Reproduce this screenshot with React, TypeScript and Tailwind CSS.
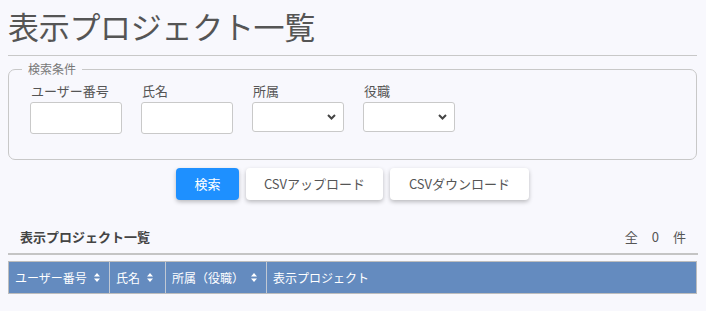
import { ChangeEvent, useState } from "react";

const sortIcon = (
  <svg width="6" height="9" viewBox="0 0 6 9" className="ml-[7px] shrink-0">
    <path d="M3 0 L6 3.5 H0 Z M0 5.5 H6 L3 9 Z" fill="#fff" />
  </svg>
);

function TextField({ label }: { label: string }) {
  const [value, setValue] = useState("");
  return (
    <label className="flex w-[92px] flex-col text-[13px] text-[#555]">
      <span className="ml-[1px] h-[17px] leading-[17px]">{label}</span>
      <input
        type="text"
        value={value}
        onChange={(e: ChangeEvent<HTMLInputElement>) => setValue(e.target.value)}
        className="mt-[3px] h-[32px] w-[92px] rounded-[3px] border border-[#c9c9c9] bg-white px-2 outline-none"
      />
    </label>
  );
}

function SelectField({ label }: { label: string }) {
  return (
    <label className="flex w-[92px] flex-col text-[13px] text-[#555]">
      <span className="ml-[1px] h-[17px] leading-[17px]">{label}</span>
      <div className="relative mt-[3px] h-[30px]">
        <select className="h-[30px] w-[92px] appearance-none rounded-[3px] border border-[#c9c9c9] bg-white px-2 outline-none">
          <option value=""></option>
        </select>
        {/* chevron drawn over the native select */}
        <svg
          width="9"
          height="6"
          viewBox="0 0 9 6"
          className="pointer-events-none absolute right-[8px] top-[12px]"
        >
          <path d="M1 1 L4.5 4.5 L8 1" stroke="#444" strokeWidth="2" fill="none" />
        </svg>
      </div>
    </label>
  );
}

export default function App() {
  const columns = [
    { label: "ユーザー番号", width: "w-[100px]", sort: true },
    { label: "氏名", width: "w-[56px]", sort: true },
    { label: "所属（役職）", width: "w-[101px]", sort: true },
    { label: "表示プロジェクト", width: "flex-1", sort: false },
  ];

  return (
    <div className="min-h-[311px] bg-[#f8f8fd] px-[8px] font-['Noto_Sans_CJK_JP','Noto_Sans',sans-serif] text-[#555]">
      <h1 className="h-[55px] pt-[6px] text-[31px] leading-[40px] tracking-[-0.3px] text-[#555]">
        表示プロジェクト一覧
      </h1>
      <div className="mr-[1px] h-px bg-[#c8c8c8]" />

      <fieldset className="mt-[6px] mr-[1px] h-[98px] rounded-[7px] border border-[#c8c8c8] pl-[21px] pt-[6px]">
        <legend className="ml-[-8px] px-[6px] text-[12px] leading-[14px] text-[#777]">
          検索条件
        </legend>
        <div className="flex gap-[19px]">
          <TextField label="ユーザー番号" />
          <TextField label="氏名" />
          <SelectField label="所属" />
          <SelectField label="役職" />
        </div>
      </fieldset>

      <div className="mt-[8px] flex justify-center gap-[7px] pr-[1px] text-[13px]">
        <button
          type="button"
          className="h-[32px] w-[63px] rounded-[4px] bg-[#1e90ff] text-white shadow-[0_2px_4px_rgba(0,0,0,0.25)]"
        >
          検索
        </button>
        <button
          type="button"
          className="h-[32px] w-[137px] rounded-[4px] bg-white text-[#555] shadow-[0_2px_4px_rgba(0,0,0,0.25)]"
        >
          CSVアップロード
        </button>
        <button
          type="button"
          className="h-[32px] w-[139px] rounded-[4px] bg-white text-[#555] shadow-[0_2px_4px_rgba(0,0,0,0.25)]"
        >
          CSVダウンロード
        </button>
      </div>

      <div className="mt-[26px] flex h-[24px] items-end justify-between pb-[4px] pl-[12px] pr-[12px] text-[13px]">
        <span className="font-bold text-[#444]">表示プロジェクト一覧</span>
        <span className="flex gap-[14px] text-[#555]">
          <span>全</span>
          <span>0</span>
          <span>件</span>
        </span>
      </div>
      <div className="mt-[3px] h-[2px] bg-[#c4c4c4]" />

      <div className="mt-[6px] mr-[1px] flex h-[33px] border border-[#bdbdbd] bg-[#648bbf] text-[12px] text-white">
        {columns.map((col, i) => (
          <div
            key={col.label}
            className={`flex items-center pl-[6px] ${col.width} ${i > 0 ? "border-l border-[#c0c8d4]" : ""}`}
          >
            <span>{col.label}</span>
            {col.sort && sortIcon}
          </div>
        ))}
      </div>
    </div>
  );
}
